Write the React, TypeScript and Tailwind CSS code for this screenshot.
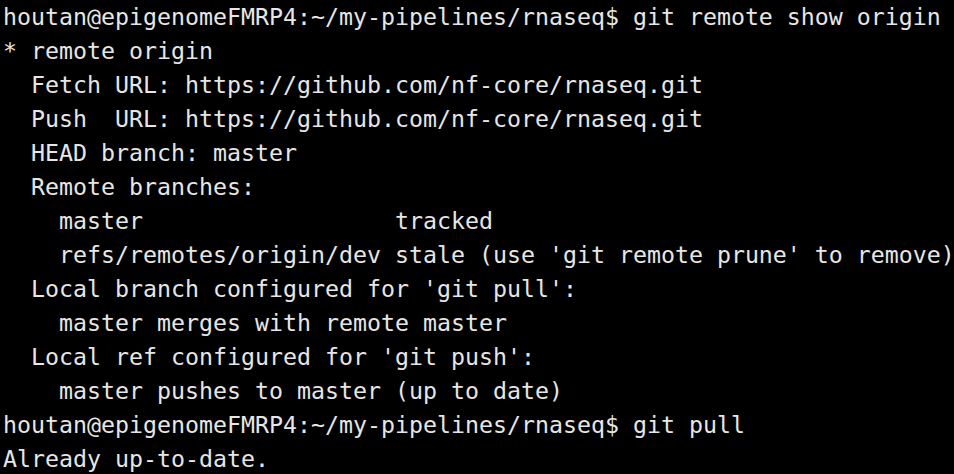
const lines = [
  "houtan@epigenomeFMRP4:~/my-pipelines/rnaseq$ git remote show origin",
  "* remote origin",
  "  Fetch URL: https://github.com/nf-core/rnaseq.git",
  "  Push  URL: https://github.com/nf-core/rnaseq.git",
  "  HEAD branch: master",
  "  Remote branches:",
  "    master                  tracked",
  "    refs/remotes/origin/dev stale (use 'git remote prune' to remove)",
  "  Local branch configured for 'git pull':",
  "    master merges with remote master",
  "  Local ref configured for 'git push':",
  "    master pushes to master (up to date)",
  "houtan@epigenomeFMRP4:~/my-pipelines/rnaseq$ git pull",
  "Already up-to-date.",
];

const App = () => {
  return (
    <div className="w-[954px] h-[474px] overflow-hidden bg-black pl-[3px] text-[#e6e6e6] font-['DejaVu_Sans_Mono',monospace] text-[23.25px] leading-[34px]">
      {lines.map((line, i) => (
        <div key={i} className="whitespace-pre">
          {line}
        </div>
      ))}
    </div>
  );
};

export default App;
